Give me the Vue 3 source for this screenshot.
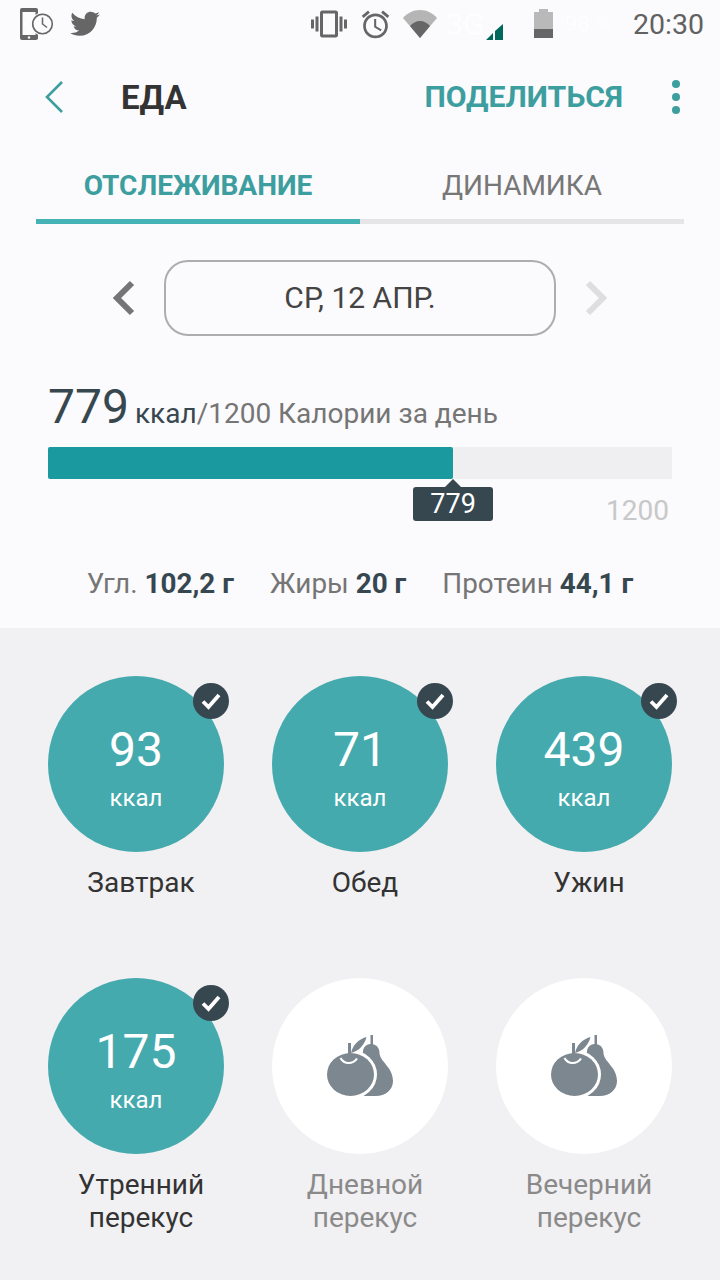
<script setup>
const progress = 779 / 1200

const macros = [
  { name: 'Угл.', value: '102,2 г' },
  { name: 'Жиры', value: '20 г' },
  { name: 'Протеин', value: '44,1 г' }
]

const meals = [
  { title: ['Завтрак'], kcal: 93 },
  { title: ['Обед'], kcal: 71 },
  { title: ['Ужин'], kcal: 439 },
  { title: ['Утренний', 'перекус'], kcal: 175 },
  { title: ['Дневной', 'перекус'] },
  { title: ['Вечерний', 'перекус'] }
]
</script>

<template>
  <div class="screen">
    <div class="status">
      <svg class="ic-usage" width="34" height="33" viewBox="0 0 34 33">
        <rect x="0" y="0" width="18" height="32" rx="2" fill="#666" />
        <rect x="2.5" y="4" width="13" height="23" fill="#fbfafc" />
        <circle cx="9" cy="29.5" r="1.2" fill="#fbfafc" />
        <circle cx="22.5" cy="16" r="11.5" fill="#fbfafc" />
        <circle cx="22.5" cy="16" r="9.8" fill="none" stroke="#666" stroke-width="1.6" />
        <path d="M22.5 9.5V16l4.5 3.5" fill="none" stroke="#666" stroke-width="1.5" />
      </svg>
      <svg class="ic-bird" width="34" height="34" viewBox="0 0 24 24">
        <path fill="#666" d="M22.46 6c-.77.35-1.6.58-2.46.69.88-.53 1.56-1.37 1.88-2.38-.83.5-1.75.85-2.72 1.05C18.37 4.5 17.26 4 16 4c-2.35 0-4.27 1.92-4.27 4.29 0 .34.04.67.11.98C8.28 9.09 5.11 7.38 3 4.79c-.37.63-.58 1.37-.58 2.15 0 1.49.75 2.81 1.91 3.56-.71 0-1.37-.2-1.95-.5v.03c0 2.08 1.48 3.82 3.44 4.21a4.22 4.22 0 0 1-1.93.07 4.28 4.28 0 0 0 4 2.98 8.521 8.521 0 0 1-5.33 1.84c-.34 0-.68-.02-1.02-.06C3.44 20.29 5.7 21 8.12 21 16 21 20.33 14.46 20.33 8.79c0-.19 0-.37-.01-.56.84-.6 1.56-1.36 2.14-2.23z" />
      </svg>
      <svg class="ic-vibrate" width="36" height="36" viewBox="0 0 24 24">
        <path fill="#666" d="M0 15h2V9H0v6zm3 2h2V7H3v10zm19-8v6h2V9h-2zm-3 8h2V7h-2v10zM16.5 3h-9C6.67 3 6 3.67 6 4.5v15c0 .83.67 1.5 1.5 1.5h9c.83 0 1.5-.67 1.5-1.5v-15c0-.83-.67-1.5-1.5-1.5zM16 19H8V5h8v14z" />
      </svg>
      <svg class="ic-alarm" width="33" height="33" viewBox="0 0 24 24">
        <path fill="#666" d="M22 5.72l-4.6-3.86-1.29 1.53 4.6 3.86L22 5.72zM7.88 3.39L6.6 1.86 2 5.71l1.29 1.53 4.59-3.85zM12.5 8H11v6l4.75 2.85.75-1.23-4-2.37V8zM12 4c-4.97 0-9 4.03-9 9s4.02 9 9 9c4.97 0 9-4.03 9-9s-4.03-9-9-9zm0 16c-3.87 0-7-3.13-7-7s3.13-7 7-7 7 3.13 7 7-3.13 7-7 7z" />
      </svg>
      <svg class="ic-wifi" width="34" height="28" viewBox="0 0 34 28">
        <path fill="#b5b5b5" d="M0 8C4 3.5 10 0 17 0s13 3.500 17 8L17 28z" />
        <path fill="#666" d="M7 16c2.500-3 6-5 10-5s7.500 2 10 5L17 28z" />
      </svg>
      <span class="net">3G</span>
      <svg class="ic-signal" width="17" height="16" viewBox="0 0 17 16">
        <path fill="#00695c" d="M0 16L7 9v7zM9 7l8-7v16H9z" />
      </svg>
      <svg class="ic-battery" width="19" height="29" viewBox="0 0 19 29">
        <path fill="#b9b9b9" d="M5 0h9v3h5v17H0V3h5z" />
        <rect y="20" width="19" height="9" fill="#666" />
      </svg>
      <span class="net pct">98 %</span>
      <span class="clock">20:30</span>
    </div>

    <header class="topbar">
      <svg class="back" width="20" height="34" viewBox="0 0 20 34">
        <path d="M18 2L3 17l15 15" fill="none" stroke="#3d9ea0" stroke-width="2.6" />
      </svg>
      <h1 class="title">ЕДА</h1>
      <span class="share">ПОДЕЛИТЬСЯ</span>
      <div class="dots"><i></i><i></i><i></i></div>
    </header>

    <nav class="tabs">
      <div class="tab active">ОТСЛЕЖИВАНИЕ</div>
      <div class="tab">ДИНАМИКА</div>
    </nav>

    <div class="date-row">
      <svg width="24" height="36" viewBox="0 0 24 36">
        <path d="M21 3L6 18l15 15" fill="none" stroke="#757575" stroke-width="6" />
      </svg>
      <div class="date">СР, 12 АПР.</div>
      <svg width="24" height="36" viewBox="0 0 24 36">
        <path d="M3 3l15 15L3 33" fill="none" stroke="#dedede" stroke-width="6" />
      </svg>
    </div>

    <section class="summary">
      <div class="total">
        <span class="total-num">779</span>
        <span class="total-unit">ккал</span><span class="total-rest">/1200 Калории за день</span>
      </div>
      <div class="bar">
        <div class="fill" :style="{ width: progress * 100 + '%' }"></div>
        <div class="tip" :style="{ left: progress * 100 + '%' }">779</div>
      </div>
      <div class="goal">1200</div>
      <div class="macros">
        <span v-for="m in macros" :key="m.name">{{ m.name }} <b>{{ m.value }}</b></span>
      </div>
    </section>

    <section class="meals">
      <div v-for="meal in meals" :key="meal.title[0]" class="meal">
        <div class="circle" :class="{ done: meal.kcal }">
          <template v-if="meal.kcal">
            <span class="kcal">{{ meal.kcal }}</span>
            <span class="unit">ккал</span>
            <svg class="check" width="36" height="36" viewBox="0 0 36 36">
              <circle cx="18" cy="18" r="18" fill="#37474f" />
              <path d="M10 18.500l5.500 5.500 10.500-12" fill="none" stroke="#fff" stroke-width="3.800" />
            </svg>
          </template>
          <svg v-else width="68" height="64" viewBox="0 0 68 64">
            <path fill="#7d8790" d="M44.500 1h2.500v9.200c4.500.8 6.500 4.800 6.500 8.800C54 28 67 33 67 47c0 9-8 15-17 15H38L30 30l7-12c0-4.500 3-7.500 7.500-8z" />
            <ellipse cx="24.500" cy="40.500" rx="26.500" ry="24.500" fill="#fff" />
            <ellipse cx="24.500" cy="40.500" rx="23.500" ry="21.500" fill="#7d8790" />
            <path fill="#7d8790" d="M22 9h3v12h-3zM25 19C27 11 32 5.500 40.500 3 38.500 11 33 17 25 19z" />
            <path d="M14.500 24c2 3.500 5 5 8 5s6.500-1.500 8.500-4.500" fill="none" stroke="#fff" stroke-width="2.200" />
          </svg>
        </div>
        <div class="name" :class="{ muted: !meal.kcal }">
          <div v-for="line in meal.title" :key="line">{{ line }}</div>
        </div>
      </div>
    </section>
  </div>
</template>

<style scoped>
.screen {
  width: 720px;
  height: 1280px;
  overflow: hidden;
  background: #fbfafc;
  font-family: Roboto, "Noto Sans", sans-serif;
  color: #333;
}

/* status bar */
.status {
  height: 50px;
  display: flex;
  align-items: flex-start;
  padding-left: 20px;
  box-sizing: border-box;
}

.ic-usage {
  margin-top: 8px;
}

.ic-bird {
  margin: 6px 0 0 14px;
}

.ic-vibrate {
  margin: 6px 0 0 209px;
}

.ic-alarm {
  margin: 8px 0 0 12px;
}

.ic-wifi {
  margin: 10px 0 0 11px;
}

.net {
  color: #fff;
  font-size: 32px;
  line-height: 48px;
  width: 49px;
  text-indent: 8px;
  opacity: 0.8;
}

.ic-signal {
  margin-top: 24px;
}

.ic-battery {
  margin: 9px 0 0 31px;
}

.pct {
  font-size: 22px;
  width: 80px;
  text-indent: 12px;
}

.clock {
  font-size: 28.5px;
  line-height: 50px;
  color: #616161;
}

/* header */
.topbar {
  height: 94px;
  display: flex;
  align-items: center;
  padding-left: 44px;
}

.title {
  margin: 0 0 0 57px;
  font-size: 33px;
  font-weight: 700;
  color: #333;
}

.share {
  margin-left: auto;
  padding-bottom: 2px;
  font-size: 30.2px;
  font-weight: 700;
  color: #3d9ea0;
}

.dots {
  width: 8px;
  margin: 0 40px 0 49px;
  display: flex;
  flex-direction: column;
  gap: 5px;
}

.dots i {
  width: 8px;
  height: 8px;
  border-radius: 50%;
  background: #3d9ea0;
}

/* tabs */
.tabs {
  margin: 0 36px;
  display: flex;
}

.tab {
  flex: 1;
  height: 80px;
  box-sizing: border-box;
  padding-top: 24px;
  text-align: center;
  font-size: 28px;
  line-height: 36px;
  color: #777;
  border-bottom: 5px solid #e5e5e7;
}

.tab.active {
  color: #3d9ea0;
  font-weight: 700;
  border-bottom-color: #45b2b6;
}

/* date */
.date-row {
  margin-top: 36px;
  display: flex;
  align-items: center;
  justify-content: center;
  gap: 29px;
}

.date {
  width: 392px;
  height: 76px;
  box-sizing: border-box;
  border: 2px solid #adadad;
  border-radius: 24px;
  text-align: center;
  font-size: 30px;
  line-height: 72px;
  color: #444;
}

/* calories */
.summary {
  height: 292px;
  padding: 0 48px;
}

.total {
  height: 111px;
  box-sizing: border-box;
  padding-top: 40px;
  line-height: 62px;
  white-space: nowrap;
}

.total-num {
  font-size: 48px;
  color: #37474f;
}

.total-unit {
  margin-left: 6px;
  font-size: 28px;
  color: #37474f;
}

.total-rest {
  font-size: 28px;
  color: #757575;
}

.bar {
  position: relative;
  height: 32px;
  background: #efeef0;
}

.fill {
  height: 100%;
  background: #1a9a9f;
  border-radius: 2px;
}

.tip {
  position: absolute;
  top: 40px;
  width: 80px;
  height: 34px;
  margin-left: -40px;
  border-radius: 3px;
  background: #37474f;
  color: #fff;
  font-size: 27px;
  line-height: 34px;
  text-align: center;
}

.tip::before {
  content: "";
  position: absolute;
  top: -8px;
  left: 32px;
  border: 8px solid transparent;
  border-top: 0;
  border-bottom-color: #37474f;
}

.goal {
  margin-top: 15px;
  padding-right: 3px;
  text-align: right;
  font-size: 28px;
  line-height: 34px;
  color: #c8c8c8;
}

.macros {
  margin-top: 38px;
  display: flex;
  justify-content: center;
  gap: 36px;
  font-size: 27.9px;
  line-height: 36px;
  color: #757575;
  white-space: nowrap;
}

.macros b {
  color: #37474f;
  font-weight: 700;
}

/* meals */
.meals {
  height: 652px;
  box-sizing: border-box;
  padding: 48px 0 0 48px;
  background: #f1f0f2;
  display: grid;
  grid-template-columns: repeat(3, 186px);
  grid-auto-rows: 302px;
  column-gap: 38px;
}

.meal {
  text-align: center;
}

.circle {
  position: relative;
  width: 176px;
  height: 176px;
  border-radius: 50%;
  background: #fff;
  color: #fff;
  display: flex;
  flex-direction: column;
  align-items: center;
  justify-content: center;
}

.circle.done {
  background: #44aaae;
}

.kcal {
  margin-top: 6px;
  font-size: 48px;
  line-height: 54px;
}

.unit {
  margin-top: 8px;
  font-size: 24px;
  line-height: 26px;
}

.check {
  position: absolute;
  top: 7px;
  right: -5px;
}

.name {
  margin-top: 14px;
  font-size: 28px;
  line-height: 33px;
  color: #333;
}

.name.muted {
  color: #8a8a8a;
}
</style>
